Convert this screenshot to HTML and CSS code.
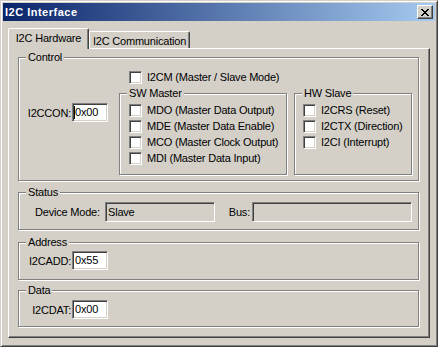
FILE: index.html
```html
<!DOCTYPE html>
<html lang="en">
<head>
    <meta charset="UTF-8">
    <meta name="viewport" content="width=device-width, initial-scale=1.0">
    <title>I2C Interface</title>
    <link rel="stylesheet" href="styles.css">
</head>
<body>

    <div class="window">
        <div class="titlebar">
            <span class="title">I2C Interface</span>
            <span class="close-btn">
                <svg width="8" height="7" viewBox="0 0 8 7" shape-rendering="crispEdges">
                    <path d="M0 0h2v1H0zM6 0h2v1H6zM1 1h2v1H1zM5 1h2v1H5zM2 2h4v1H2zM3 3h2v1H3zM2 4h4v1H2zM1 5h2v1H1zM5 5h2v1H5zM0 6h2v1H0zM6 6h2v1H6z" fill="#000"/>
                </svg>
            </span>
        </div>

        <div class="tabs">
            <div class="tab active">I2C Hardware</div>
            <div class="tab comm">I2C Communication</div>
        </div>

        <div class="panel">
            <div class="group control">
                <div class="group-title">Control</div>
                <div class="control-body">
                    <div class="field con-field">
                        <label>I2CCON:</label>
                        <div class="edit"><span class="caret"></span>0x00</div>
                    </div>
                    <div class="control-right">
                        <div class="check master-mode"><span class="box"></span>I2CM (Master / Slave Mode)</div>
                        <div class="subgroups">
                            <div class="group sw-master">
                                <div class="group-title">SW Master</div>
                                <div class="checks">
                                    <div class="check"><span class="box"></span>MDO (Master Data Output)</div>
                                    <div class="check"><span class="box"></span>MDE (Master Data Enable)</div>
                                    <div class="check"><span class="box"></span>MCO (Master Clock Output)</div>
                                    <div class="check"><span class="box"></span>MDI (Master Data Input)</div>
                                </div>
                            </div>
                            <div class="group hw-slave">
                                <div class="group-title">HW Slave</div>
                                <div class="checks">
                                    <div class="check"><span class="box"></span>I2CRS (Reset)</div>
                                    <div class="check"><span class="box"></span>I2CTX (Direction)</div>
                                    <div class="check"><span class="box"></span>I2CI (Interrupt)</div>
                                </div>
                            </div>
                        </div>
                    </div>
                </div>
            </div>

            <div class="group status">
                <div class="group-title">Status</div>
                <div class="status-row">
                    <label class="device-label">Device Mode:</label>
                    <div class="readonly device-field">Slave</div>
                    <label class="bus-label">Bus:</label>
                    <div class="readonly bus-field"></div>
                </div>
            </div>

            <div class="group address">
                <div class="group-title">Address</div>
                <div class="field">
                    <label>I2CADD:</label>
                    <div class="edit">0x55</div>
                </div>
            </div>

            <div class="group data">
                <div class="group-title">Data</div>
                <div class="field">
                    <label>I2CDAT:</label>
                    <div class="edit">0x00</div>
                </div>
            </div>
        </div>
    </div>

</body>
</html>
```

FILE: styles.css
```css
html, body {
    margin: 0;
    background-color: #d4d0c8;
}
body {
    font-family: "Liberation Sans", Arial, sans-serif;
    font-size: 11px;
    letter-spacing: -0.2px;
    color: #000;
}
.window {
    width: 438px;
    height: 347px;
    box-sizing: border-box;
    padding: 2px;
    border: 1px solid;
    border-color: #d4d0c8 #404040 #404040 #d4d0c8;
    box-shadow: inset 1px 1px #fff, inset -1px -1px #808080;
    background-color: #d4d0c8;
}
.titlebar {
    height: 18px;
    display: flex;
    align-items: center;
    justify-content: space-between;
    padding: 0 2px;
    background: linear-gradient(to right, #0a246a, #a6caf0);
}
.title {
    color: #fff;
    font-weight: bold;
    letter-spacing: 0.5px;
    line-height: 13px;
}
.close-btn {
    width: 16px;
    height: 14px;
    box-sizing: border-box;
    display: flex;
    align-items: center;
    justify-content: center;
    background-color: #d4d0c8;
    border: 1px solid;
    border-color: #fff #404040 #404040 #fff;
    box-shadow: inset -1px -1px #808080;
}
.tabs {
    display: flex;
    align-items: flex-end;
    margin: 7px 0 0 5px;
}
.tab {
    box-sizing: border-box;
    height: 17px;
    padding-top: 3px;
    line-height: 13px;
    text-align: center;
    background-color: #d4d0c8;
    border-top: 1px solid #fff;
    border-left: 1px solid #fff;
    border-right: 1px solid #404040;
    border-radius: 2px 2px 0 0;
    box-shadow: inset -1px 0 #808080;
}
.tab.active {
    width: 81px;
    height: 21px;
    margin-bottom: -1px;
    position: relative;
    z-index: 1;
}
.tab.comm {
    width: 101px;
}
.panel {
    width: 422px;
    height: 290px;
    box-sizing: border-box;
    border: 1px solid;
    border-color: #fff #404040 #404040 #fff;
    box-shadow: inset -1px -1px #808080;
    margin-left: 5px;
    padding: 8px 10px 0 9px;
    display: flex;
    flex-direction: column;
}
.group {
    box-sizing: border-box;
    border: 1px solid #808080;
    box-shadow: inset 1px 1px #fff, 1px 1px #fff;
}
.group-title {
    width: fit-content;
    margin: -7px 0 0 7px;
    padding: 0 2px;
    line-height: 13px;
    background-color: #d4d0c8;
}
.control {
    height: 124px;
}
.control-body {
    display: flex;
    align-items: flex-start;
}
.field {
    display: flex;
    align-items: center;
}
.field label {
    width: 52px;
    margin-right: 1px;
    text-align: right;
}
.con-field {
    margin-top: 39px;
}
.edit, .readonly {
    box-sizing: border-box;
    border: 1px solid;
    border-color: #808080 #fff #fff #808080;
    box-shadow: inset 1px 1px #404040, inset -1px -1px #d4d0c8;
    padding-left: 2px;
    white-space: nowrap;
}
.edit {
    width: 36px;
    height: 19px;
    line-height: 17px;
    background-color: #fff;
}
.caret {
    display: inline-block;
    width: 1px;
    height: 13px;
    margin-left: -1px;
    vertical-align: -3px;
    background-color: #000;
}
.control-right {
    margin-left: 11px;
}
.check {
    display: flex;
    align-items: center;
    height: 13px;
    line-height: 13px;
    white-space: nowrap;
}
.box {
    width: 13px;
    height: 13px;
    box-sizing: border-box;
    margin-right: 5px;
    flex-shrink: 0;
    background-color: #fff;
    border: 1px solid;
    border-color: #808080 #fff #fff #808080;
    box-shadow: inset 1px 1px #404040, inset -1px -1px #d4d0c8;
}
.master-mode {
    margin-top: 7px;
    padding-left: 10px;
}
.subgroups {
    display: flex;
    gap: 7px;
    margin-top: 9px;
}
.sw-master {
    width: 168px;
    height: 82px;
}
.hw-slave {
    width: 118px;
    height: 82px;
}
.checks {
    display: flex;
    flex-direction: column;
    gap: 3px;
    margin-top: 4px;
    padding-left: 9px;
}
.hw-slave .checks {
    padding-left: 8px;
}
.status {
    height: 38px;
    margin-top: 11px;
}
.status-row {
    display: flex;
    align-items: center;
    margin-top: 3px;
    padding-left: 16px;
}
.readonly {
    height: 20px;
    line-height: 18px;
    background-color: #d4d0c8;
}
.device-label {
    width: 70px;
}
.device-field {
    width: 110px;
}
.bus-label {
    width: 37px;
    padding-right: 2px;
    box-sizing: border-box;
    text-align: right;
}
.bus-field {
    width: 160px;
}
.address {
    height: 38px;
    margin-top: 12px;
}
.address .field {
    margin-top: 2px;
}
.data {
    height: 37px;
    margin-top: 10px;
}
.data .field {
    margin-top: 3px;
}
```
